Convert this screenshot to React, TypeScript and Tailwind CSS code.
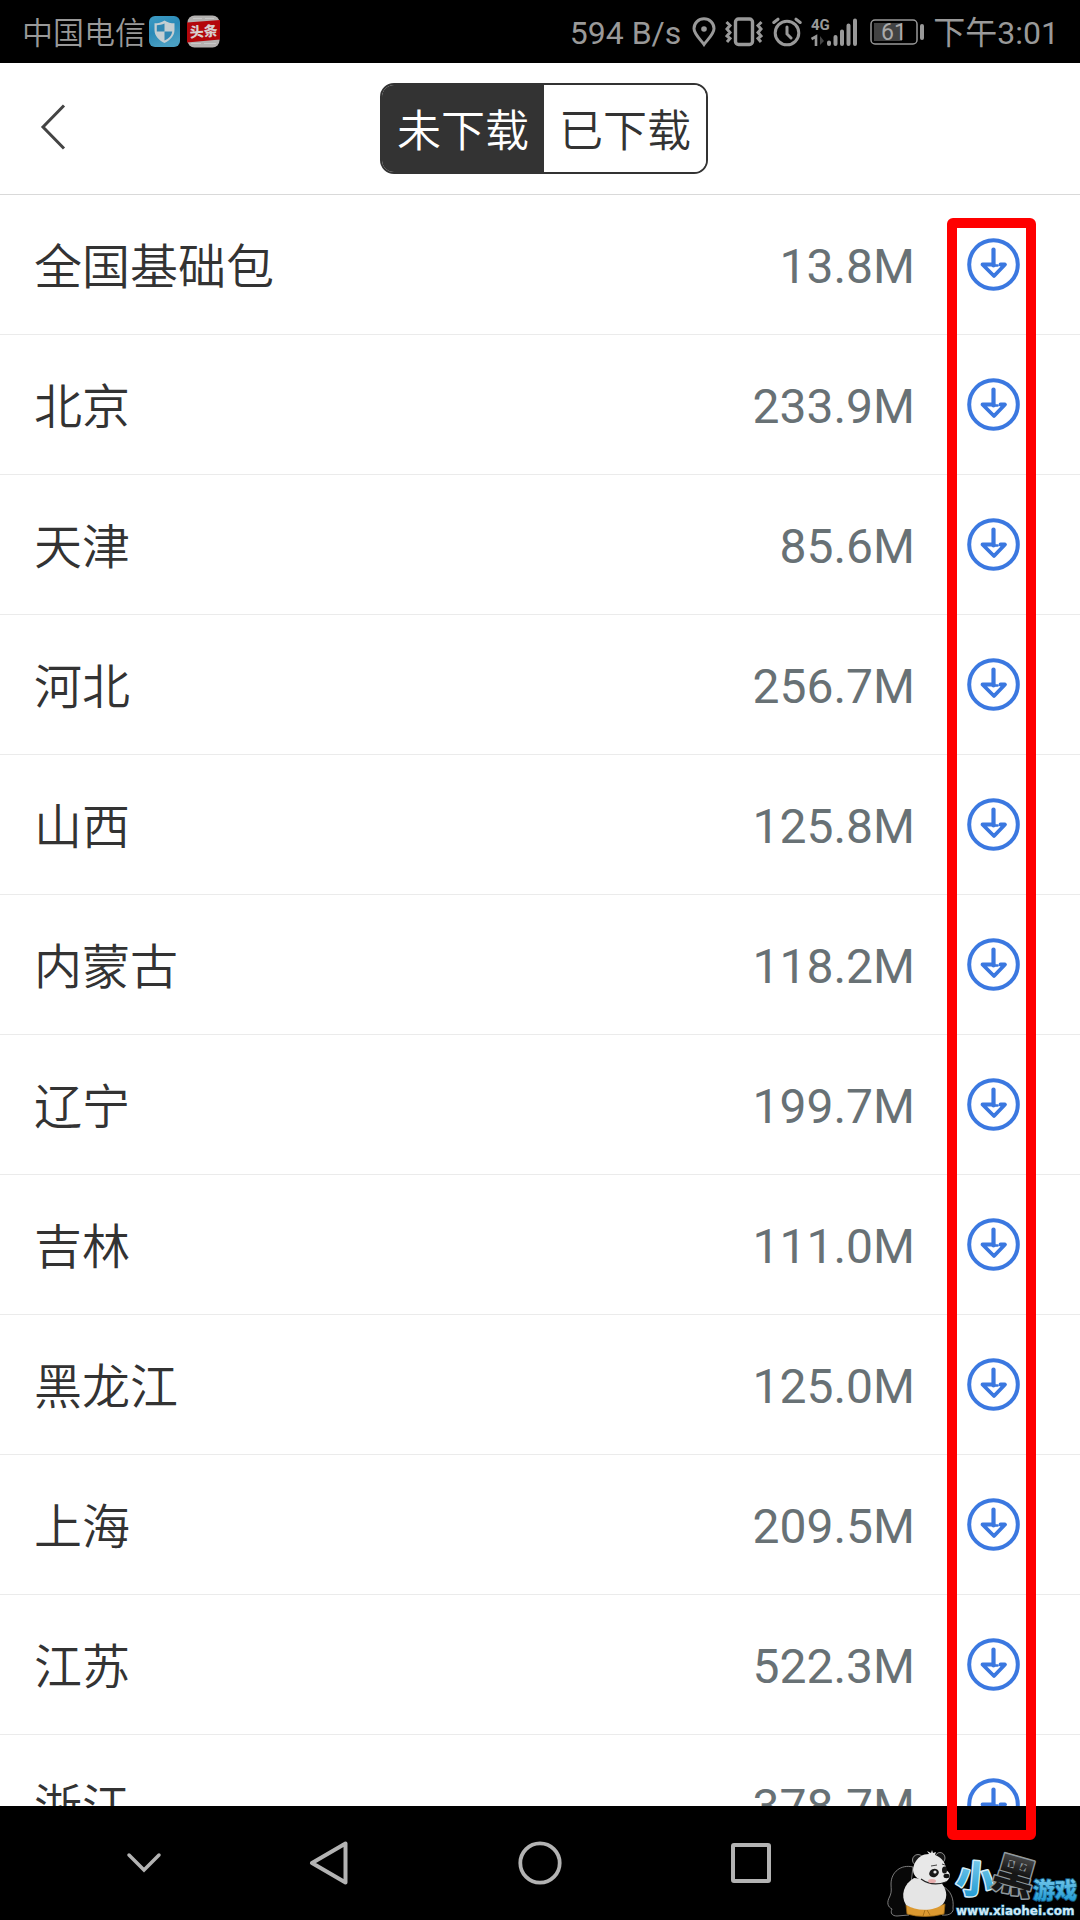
import { useState } from "react";

interface OfflinePackage {
  name: string;
  size: string;
}

const PACKAGES: OfflinePackage[] = [
  { name: "全国基础包", size: "13.8M" },
  { name: "北京", size: "233.9M" },
  { name: "天津", size: "85.6M" },
  { name: "河北", size: "256.7M" },
  { name: "山西", size: "125.8M" },
  { name: "内蒙古", size: "118.2M" },
  { name: "辽宁", size: "199.7M" },
  { name: "吉林", size: "111.0M" },
  { name: "黑龙江", size: "125.0M" },
  { name: "上海", size: "209.5M" },
  { name: "江苏", size: "522.3M" },
  { name: "浙江", size: "378.7M" },
];

function ShieldIcon() {
  return (
    <svg width="31" height="31" viewBox="0 0 31 31">
      <defs>
        <linearGradient id="shieldBg" x1="0" y1="0" x2="0.4" y2="1">
          <stop offset="0" stopColor="#3f9cc4" />
          <stop offset="0.5" stopColor="#2a8ab8" />
          <stop offset="1" stopColor="#4a9fc2" />
        </linearGradient>
      </defs>
      <rect width="31" height="31" rx="6" fill="url(#shieldBg)" />
      <path
        d="M15.500 4.500C12.500 6.700 9 7.300 5.500 7.300V14C5.500 20 10 24.500 15.500 27C21 24.500 25.500 20 25.500 14V7.300C22 7.300 18.500 6.700 15.500 4.500Z"
        fill="#c4ced2"
      />
      <path d="M15.500 7.500V15.500H7.800V9.200C10.500 9 13.200 8.600 15.500 7.500Z" fill="#2f86b2" />
      <path d="M15.500 15.500H23.200C22.700 19.800 19.500 22.700 15.500 24.600Z" fill="#2f86b2" />
    </svg>
  );
}

function NewsIcon() {
  return (
    <svg width="33" height="33" viewBox="0 0 33 33" className="ml-[7px]">
      <rect x="0.500" y="0.500" width="32" height="32" rx="7" fill="#b4b1b0" />
      <path d="M4 28.500H14M17 28.500H29M6 3.500H15M18 3.500H27" stroke="#c8c8c8" strokeWidth="1" />
      <path d="M0 7.500L33 5V24.500L0 27.500Z" fill="#b3070b" />
      <text
        x="16.500"
        y="21.500"
        textAnchor="middle"
        fontSize="14"
        fontWeight="900"
        fill="#d8cfcf"
        fontFamily="'Noto Sans CJK SC', sans-serif"
        transform="rotate(-4 16 16)"
      >
        头条
      </text>
    </svg>
  );
}

function StatusIcons() {
  return (
    <>
      <svg width="24" height="30" viewBox="0 0 24 30" fill="none" stroke="#999" className="ml-[11px]">
        <path
          d="M12 27.500C8.500 22.500 2 17 2 11.500A10 9.700 0 0 1 22 11.500C22 17 15.500 22.500 12 27.500Z"
          strokeWidth="3"
        />
        <circle cx="12" cy="12" r="2.800" fill="#999" stroke="none" />
      </svg>
      <svg width="38" height="30" viewBox="0 0 38 30" fill="none" stroke="#999" className="ml-[9px]">
        <rect x="10.500" y="2" width="17" height="25.500" rx="3" strokeWidth="3.400" />
        <path
          d="M1.500 5L5 8.500L2 12L5 15.500L2 19L5 21.500L2 25M36.500 5L33 8.500L36 12L33 15.500L36 19L33 21.500L36 25"
          strokeWidth="3"
        />
      </svg>
      <svg
        width="30"
        height="30"
        viewBox="0 0 30 30"
        fill="none"
        stroke="#999"
        strokeWidth="3"
        strokeLinecap="round"
        className="ml-[9px]"
      >
        <circle cx="15" cy="16" r="11.800" />
        <path d="M15 10V17L19 21M1.800 5.500L6 2.200M28.200 5.500L24 2.200" />
      </svg>
      <svg width="48" height="30" viewBox="0 0 48 30" className="ml-[9px]">
        <text x="0" y="13" fontSize="15" fontWeight="700" fill="#999" fontFamily="Roboto, sans-serif">
          4G
        </text>
        <path d="M0.500 22L5 19.500V29" fill="none" stroke="#999" strokeWidth="2.600" />
        <path d="M9 19V28L13 24Z" fill="#444" />
        <path
          d="M18 25.500V27M24.500 20V27M31 14.500V27M37.500 8.500V27M44 3.500V27"
          stroke="#999"
          strokeWidth="4"
          strokeLinecap="round"
        />
      </svg>
      <svg width="54" height="26" viewBox="0 0 54 26" className="ml-[11px]">
        <rect x="1" y="1" width="46" height="24" rx="4" fill="none" stroke="#999" strokeWidth="1.500" />
        <rect x="4" y="4" width="28" height="18" fill="#424242" />
        <rect x="50" y="5" width="4" height="16" rx="2" fill="#999" />
        <text x="24" y="21" textAnchor="middle" fontSize="23" fill="#aaa" fontFamily="Roboto, sans-serif">
          61
        </text>
      </svg>
    </>
  );
}

function DownloadIcon() {
  return (
    <svg
      width="54"
      height="54"
      viewBox="0 0 54 54"
      fill="none"
      stroke="#3b78e0"
      strokeLinecap="round"
      strokeLinejoin="round"
    >
      <circle cx="27.500" cy="26.500" r="24.300" strokeWidth="4" />
      <path d="M27.500 11.500V27.500" strokeWidth="4.200" />
      <path d="M27.500 26.500H16.500L28 38L39 26.500H34.500" strokeWidth="3.800" />
      <path d="M28 27.500H31.500" strokeWidth="2.600" />
    </svg>
  );
}

function Watermark() {
  return (
    <svg width="194" height="70" viewBox="0 0 194 70" className="pointer-events-none absolute bottom-0 right-0">
      <defs>
        <linearGradient id="logoBlue" x1="0" y1="0" x2="0" y2="1">
          <stop offset="0" stopColor="#8bd4f2" />
          <stop offset="1" stopColor="#1594cf" />
        </linearGradient>
        <linearGradient id="logoDark" x1="0" y1="0" x2="0" y2="1">
          <stop offset="0" stopColor="#6a6a6a" />
          <stop offset="0.500" stopColor="#161616" />
        </linearGradient>
      </defs>
      {/* panda */}
      <path
        d="M27 17C15 14 5 22 5 34C5 39 6 41 4 46C0 53 2 57 6 59C4 63 6 66 11 66L23 65V50Z"
        fill="#080808"
        stroke="#999"
        strokeWidth="0.800"
      />
      <path d="M56 36C65 40 68 49 67 58C68 62 64 66 56 65L52 52Z" fill="#080808" stroke="#999" strokeWidth="0.800" />
      <path d="M20 55Q37 62 59 54L58 64Q38 69 21 64Z" fill="#dc9930" stroke="#9b6714" strokeWidth="0.800" />
      <path d="M39 60L37 66M41 60L44 65" stroke="#9b6714" strokeWidth="0.800" />
      <path d="M28 28C18 34 14 45 20 55C31 62 49 61 57 54C63 46 60 38 54 31Z" fill="#e5e5e5" />
      <circle cx="32" cy="10" r="5.500" fill="#151515" stroke="#aaa" strokeWidth="0.800" />
      <ellipse cx="54" cy="8" rx="5" ry="5.500" fill="#151515" stroke="#aaa" strokeWidth="0.800" />
      <path
        d="M28 15C31 7 37 4 43 4L41 1L45 3L46 0L47 3L50 2L49 5C57 8 60 14 60 20C65 23 65 27 61 31C53 36 40 35 33 29C27 26 26 20 28 15Z"
        fill="#e8e8e8"
      />
      <path d="M35 29Q46 37 60 32" fill="none" stroke="#222" strokeWidth="1.200" />
      <ellipse cx="48" cy="23" rx="5" ry="4" fill="#171717" transform="rotate(-25 48 23)" />
      <ellipse cx="58.500" cy="20" rx="2.500" ry="3.500" fill="#171717" />
      <circle cx="49" cy="22" r="1.600" fill="#e8e8e8" />
      <ellipse cx="60.500" cy="26" rx="3" ry="2.200" fill="#111" />
      <path d="M45 16L51 15M56 14L59 15" stroke="#444" strokeWidth="1" />
      <ellipse cx="46" cy="31" rx="4" ry="2" fill="#e6adad" />
      {/* lettering */}
      <g fontFamily="'Noto Sans CJK SC', sans-serif" fontWeight="900" paintOrder="stroke" strokeLinejoin="round">
        <text x="70" y="43" fontSize="38" fill="url(#logoBlue)" stroke="#d5edf7" strokeWidth="3" transform="rotate(5 88 30)">
          小
        </text>
        <text x="107" y="41" fontSize="42" fill="url(#logoDark)" stroke="#8f999e" strokeWidth="3" transform="rotate(16 127 27)">
          黑
        </text>
        <text x="147" y="48" fontSize="22" fill="url(#logoBlue)" stroke="#125a80" strokeWidth="2">
          游戏
        </text>
      </g>
      <text
        x="70"
        y="65"
        fontSize="12"
        fontWeight="700"
        fill="#cfe8f4"
        stroke="#2a7da6"
        strokeWidth="1"
        paintOrder="stroke"
        fontFamily="'DejaVu Sans', sans-serif"
      >
        www.xiaohei.com
      </text>
    </svg>
  );
}

export default function App() {
  const [tab, setTab] = useState<"pending" | "done">("pending");

  const tabClass = (active: boolean) =>
    active ? "flex-1 bg-[#333] pt-1.5 text-white" : "flex-1 bg-white pt-1.5 text-[#333]";

  return (
    <div className="relative flex h-screen flex-col overflow-hidden bg-white font-['Roboto','Noto_Sans_CJK_SC',sans-serif]">
      {/* Status bar */}
      <div className="flex h-[63px] shrink-0 items-center justify-between bg-black pl-[22px] pr-[21px] text-[32px] leading-none text-[#999]">
        <div className="flex items-center">
          <span className="mr-[3px] pt-1 text-[31px] font-[350]">中国电信</span>
          <ShieldIcon />
          <NewsIcon />
        </div>
        <div className="flex items-center">
          <span className="pt-0.5">594 B/s</span>
          <StatusIcons />
          <span className="ml-[9px] pt-0.5">下午3:01</span>
        </div>
      </div>

      {/* Header */}
      <header className="grid h-[132px] shrink-0 grid-cols-3 items-center border-b border-[#d9d9d9] pl-2">
        <button type="button" aria-label="返回" className="mb-1 ml-7 w-9">
          <svg width="36" height="48" viewBox="0 0 36 48" fill="none" stroke="#444" strokeWidth="3">
            <path d="M28 2.500L7 24L28 45.500" />
          </svg>
        </button>
        <div className="flex h-[91px] w-[328px] justify-self-center overflow-hidden rounded-[14px] border-2 border-[#333] text-[44px] leading-none font-[350]">
          <button type="button" onClick={() => setTab("pending")} className={tabClass(tab === "pending")}>
            未下载
          </button>
          <button type="button" onClick={() => setTab("done")} className={tabClass(tab === "done")}>
            已下载
          </button>
        </div>
      </header>

      {/* Package list */}
      <ul className="min-h-0 flex-1 overflow-y-auto [scrollbar-width:none]">
        {PACKAGES.map((item) => (
          <li
            key={item.name}
            className="flex h-[140px] items-center border-b border-[#ebebeb] pl-[34px] pr-[60px] text-[48px] leading-none"
          >
            <span className="flex-1 pt-1.5 font-[350] text-[#333]">{item.name}</span>
            <span className="pt-1 text-[#687175]">{item.size}</span>
            <button type="button" aria-label={`下载${item.name}`} className="ml-[51px]">
              <DownloadIcon />
            </button>
          </li>
        ))}
      </ul>

      {/* Navigation bar */}
      <nav className="grid h-[114px] shrink-0 grid-cols-5 items-center justify-items-center bg-black px-3">
        <button type="button" aria-label="收起" className="ml-[52px]">
          <svg width="36" height="22" viewBox="0 0 36 22" fill="none" stroke="#b3b3b3" strokeWidth="3.500" strokeLinecap="round">
            <path d="M3 3L18 18L33 3" />
          </svg>
        </button>
        <button type="button" aria-label="后退">
          <svg width="40" height="44" viewBox="0 0 40 44" fill="none" stroke="#b3b3b3" strokeWidth="4" strokeLinejoin="round">
            <path d="M36.500 2.500V41.500L3 22Z" />
          </svg>
        </button>
        <button type="button" aria-label="主页">
          <svg width="44" height="44" viewBox="0 0 44 44" fill="none" stroke="#b3b3b3" strokeWidth="3.800">
            <circle cx="22" cy="22" r="19.700" />
          </svg>
        </button>
        <button type="button" aria-label="最近任务">
          <svg width="40" height="40" viewBox="0 0 40 40" fill="none" stroke="#b3b3b3" strokeWidth="4" strokeLinejoin="round">
            <rect x="2" y="2" width="36" height="36" rx="1" />
          </svg>
        </button>
      </nav>

      {/* Highlight around the download column */}
      <div className="pointer-events-none absolute bottom-20 right-11 top-[218px] w-[89px] rounded-[6px] border-10 border-[#f00]" />
      <Watermark />
    </div>
  );
}
